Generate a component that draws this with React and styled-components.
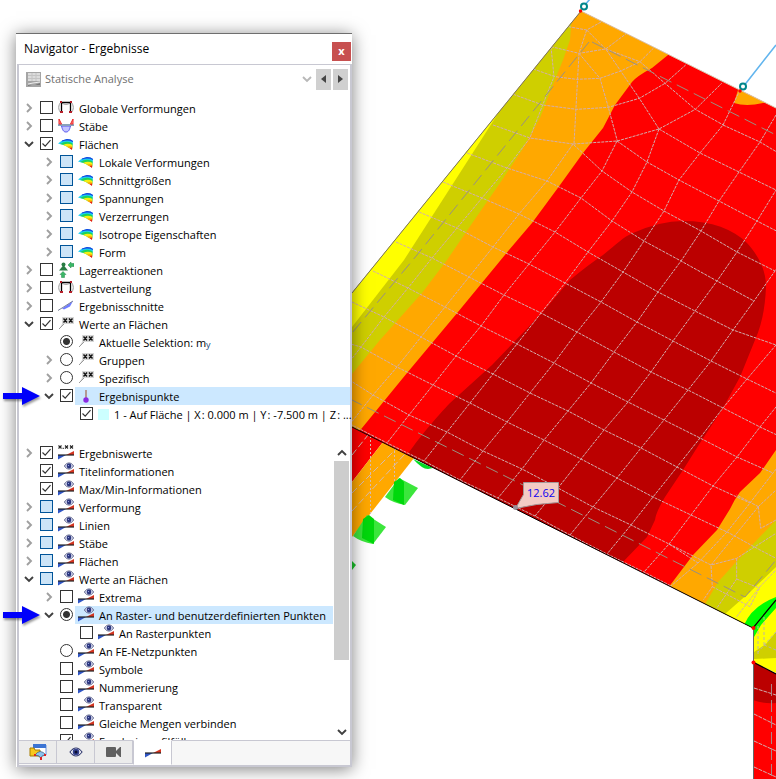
import React, { useState } from 'react';
import styled, { createGlobalStyle } from 'styled-components';

const GlobalStyle = createGlobalStyle`
  * {
    box-sizing: border-box;
  }
  body {
    margin: 0;
    background: #fff;
    font-family: 'Open Sans', 'Noto Sans', sans-serif;
    font-size: 11px;
    color: #000;
  }
`;

const Page = styled.main`
  position: relative;
  display: flex;
  height: 100vh;
  min-height: 600px;
  padding: 33px 0 12px 16px;
  overflow: hidden;
`;

const SceneSvg = styled.svg`
  position: absolute;
  inset: 0;
  width: 100%;
  height: 100%;
`;

const Panel = styled.section`
  position: relative;
  display: flex;
  flex-direction: column;
  width: 336px;
  padding-left: 1px;
  border-top: 1px solid #6e6e6e;
  background: #fff;
  box-shadow: 0 2px 16px rgba(0, 0, 0, 0.5);
`;

const TitleBar = styled.header`
  display: flex;
  align-items: center;
  justify-content: space-between;
  height: 30px;
  padding: 4px 1px 0 7px;
`;

const PanelTitle = styled.h1`
  margin: 0 0 4px;
  font-size: 12px;
  font-weight: 400;
  line-height: 18px;
`;

const CloseButton = styled.button`
  width: 19px;
  height: 19px;
  padding: 0;
  border: 0;
  background: #c75050;
  color: #fff;
  font: inherit;
  font-weight: 700;
  line-height: 16px;
`;

const PanelBody = styled.div`
  display: flex;
  flex: 1;
  flex-direction: column;
  min-height: 0;
  border: 2px solid #c8c8d2;
  border-width: 1px 2px;
  border-bottom: 0;
`;

const SelectBar = styled.div`
  display: flex;
  align-items: center;
  gap: 2px;
  height: 28px;
  margin-bottom: 6px;
  padding: 0 2px 0 7px;
`;

const AnalysisSelect = styled.select`
  flex: 1;
  height: 20px;
  margin-left: 2px;
  padding: 0;
  border: 0;
  appearance: none;
  background: transparent;
  color: #707070;
  font: inherit;
  line-height: 20px;
  opacity: 1;
`;

const StepButton = styled.button`
  display: grid;
  place-items: center;
  width: 15px;
  height: 21px;
  padding: 0;
  border: 0;
  background: #d0d0d0;
`;

const Tree = styled.ul`
  flex: 1;
  min-width: 0;
  margin: 0;
  padding: 0;
  list-style: none;
`;

const LowerTree = styled.div`
  display: flex;
  flex: 1;
  min-height: 0;
  margin-top: 21px;
  overflow: hidden;
`;

const Row = styled.li`
  display: flex;
  align-items: flex-start;
  height: 18px;
  padding-left: ${({ $level }) => 1 + $level * 20}px;
`;

const Expander = styled.button`
  display: grid;
  flex: none;
  place-items: center;
  width: 17px;
  height: 18px;
  margin-right: 3px;
  padding: 0;
  border: 0;
  background: none;
  visibility: ${({ $hidden }) => ($hidden ? 'hidden' : 'visible')};
`;

const Tick = styled.input`
  flex: none;
  width: 13px;
  height: 13px;
  margin: 2px 2px 0 0;
  border: 1px solid ${({ $partial }) => ($partial ? '#005499' : '#333')};
  border-radius: ${({ type }) => (type === 'radio' ? '50%' : '0')};
  appearance: none;
  background: ${({ $partial }) => ($partial ? '#cce4f7' : '#fff')};

  &[type='checkbox']:checked {
    background: #fff
      url("data:image/svg+xml,%3Csvg xmlns='http://www.w3.org/2000/svg' viewBox='0 0 11 11'%3E%3Cpath d='M1.500 5.500l2.700 2.700 5.300-6' fill='none' stroke='%23333' stroke-width='1.200'/%3E%3C/svg%3E");
  }
  &[type='radio']:checked {
    background: radial-gradient(circle, #333 3px, #fff 4px);
  }
`;

const RowLabel = styled.label`
  display: flex;
  flex: 1;
  align-items: center;
  gap: 5px;
  min-width: 0;
  height: 18px;
  padding-left: 3px;
  background: ${({ $selected }) => ($selected ? '#cce8ff' : 'none')};
  line-height: 18px;
  white-space: nowrap;

  svg {
    flex: none;
  }
  sub {
    color: #234a78;
    font-size: 9px;
    line-height: 9px;
    vertical-align: -1px;
  }
`;

const LabelText = styled.span`
  padding-top: 2px;
`;

const Swatch = styled.span`
  flex: none;
  width: 11px;
  height: 11px;
  background: #ccffff;
`;

const ScrollBar = styled.div`
  display: flex;
  flex: none;
  flex-direction: column;
  width: 17px;
  padding: 0 1px;
`;

const ScrollButton = styled.button`
  display: grid;
  place-items: center;
  width: 15px;
  height: 17px;
  padding: 0;
  border: 0;
  background: none;
`;

const ScrollTrack = styled.div`
  flex: 1;
`;

const ScrollThumb = styled.div`
  height: 76%;
  background: #cdcdcd;
`;

const TabBar = styled.nav`
  display: flex;
  height: 27px;
  border-bottom: 2px solid #c8c8d2;
  background: #f7f7f7;
  box-shadow: inset 0 1px #c8c8d2;
`;

const Tab = styled.button`
  display: grid;
  place-items: center;
  width: ${({ $active }) => ($active ? '39px' : '38px')};
  height: ${({ $active }) => ($active ? '25px' : '24px')};
  padding: 0;
  border: 1px solid #c8c8d2;
  border-top-color: ${({ $active }) => ($active ? '#fff' : '#c8c8d2')};
  border-left-width: ${({ $active }) => ($active ? '1px' : '0')};
  border-bottom-color: ${({ $active }) => ($active ? '#fff' : '#c8c8d2')};
  background: ${({ $active }) => ($active ? '#fff' : '#ececec')};
`;

const Marker = styled.svg`
  position: absolute;
  top: ${({ $top }) => $top}px;
  left: 2px;
  filter: drop-shadow(1px 2px 1px rgba(0, 0, 0, 0.4));
`;

const Chevron = ({ dir, color = '#404040' }) => {
  const shapes = {
    right: 'M3 1l4 4-4 4',
    down: 'M1 3l4 4 4-4',
    up: 'M1 7l4-4 4 4',
  };
  return (
    <svg width="10" height="10" viewBox="0 0 10 10">
      <path d={shapes[dir]} fill="none" stroke={color} strokeWidth="1.900" />
    </svg>
  );
};

const FrameIcon = () => (
  <svg width="16" height="16" viewBox="0 0 16 16">
    <path d="M3 2C0 5 0 10 3 13M13 2c3 3 3 8 0 11" fill="none" stroke="#999" />
    <path d="M4 3c2 2 6 2 8 0" fill="none" stroke="#aaa" />
    <path d="M3.500 12V2.500h9V12" fill="none" stroke="#000" strokeWidth="1.300" />
    <path d="M2 1h2v2H2zM12 1h2v2h-2zM2 11h3v2H2zM11 11h3v2h-3z" fill="#b5202a" />
  </svg>
);

const BeamIcon = () => (
  <svg width="16" height="16" viewBox="0 0 16 16">
    <path d="M3.500 8h9c-1 4-2 6-4.500 6S4.500 12 3.500 8z" fill="#c3c3ff" stroke="#5555ef" />
    <path d="M0 7h16" stroke="#8aa2bb" strokeWidth="2" />
    <path d="M1 1v5h2.500zM15 1v5h-2.500z" fill="#ff9c9c" stroke="#e22" />
  </svg>
);

const SurfaceIcon = () => (
  <svg width="16" height="16" viewBox="0 0 16 16">
    <path d="M0 7.500L4 4.500 9 3q4 0 6 2l-1 8-4-2-4-2z" fill="#19cdf2" />
    <path d="M4 4.500L9 3q4 0 6 2l-.2 1Q10 3.500 4 5.500z" fill="#1b3ee0" />
    <path d="M2 8Q9 4 14.700 7.500L14 13l-4-2-4-2z" fill="#1cd45a" />
    <path d="M5 9Q10 6.500 14.500 9L14 13l-4-2z" fill="#f4ee12" />
    <path d="M9 11q2-1.500 5.300-.5L14 13.500z" fill="#ffb000" />
    <path d="M11.500 12l2.700-.5-.2 2.500z" fill="#e21a1a" />
  </svg>
);

const SupportIcon = () => (
  <svg width="16" height="16" viewBox="0 0 16 16">
    <circle cx="5.500" cy="2.500" r="2" fill="#287c43" />
    <path d="M5.500 3L10 8.500H1z" fill="#287c43" />
    <path d="M10 3l3-3v1.500h3v3h-3V6zM5 9.500l3 3H6.500v3h-3v-3H2z" fill="#39b866" stroke="#23864a" strokeWidth=".5" />
  </svg>
);

const SectionIcon = () => (
  <svg width="16" height="16" viewBox="0 0 16 16">
    <path d="M4 10.500L15 3l-3 5.500-6 3z" fill="#6f7dff" />
    <path d="M0 12.500L15 3" stroke="#788099" />
  </svg>
);

const ValueIcon = () => (
  <svg width="16" height="16" viewBox="0 0 16 16">
    <path d="M1 13l3-5V1h12v7H6z" fill="#d6d6d6" />
    <path d="M1 13l5-5" stroke="#999" />
    <path d="M5.500 2.500l3.500 4m0-4l-3.500 4M11 2.500l3.500 4m0-4l-3.500 4" stroke="#111" strokeWidth="1.400" />
  </svg>
);

const PointIcon = () => (
  <svg width="16" height="16" viewBox="0 0 16 16">
    <path d="M8 2v9" stroke="#a97964" strokeWidth="1.400" />
    <circle cx="8" cy="12" r="2.700" fill="#8a2be2" />
  </svg>
);

const Wedges = () => (
  <>
    <path d="M0 10h8l-8 4.500z" fill="#2f55c4" />
    <path d="M16 6v4H8z" fill="#d33420" />
    <path d="M0 10h16" stroke="#222" strokeWidth="1.200" />
  </>
);

const EyeWedgeIcon = () => (
  <svg width="16" height="18" viewBox="0 -1 16 18">
    <Wedges />
    <path d="M6.500 3c2-4 7-4 9 0-2 4-7 4-9 0z" fill="#e5e8fb" stroke="#555b84" />
    <circle cx="11" cy="3" r="2.400" fill="#2c377f" />
    <circle cx="10.500" cy="2.500" r=".6" fill="#a9b4ee" />
  </svg>
);

const NumberWedgeIcon = () => (
  <svg width="16" height="18" viewBox="0 -1 16 18">
    <Wedges />
    <path d="M.5.500l3 3m0-3l-3 3M7 .5l3 3m0-3l-3 3M12 .5l3 3m0-3l-3 3M5.200 2.800v1.200" stroke="#222" strokeWidth="1.100" />
  </svg>
);

const icons = {
  frame: FrameIcon,
  beam: BeamIcon,
  surface: SurfaceIcon,
  support: SupportIcon,
  section: SectionIcon,
  value: ValueIcon,
  point: PointIcon,
  eye: EyeWedgeIcon,
  number: NumberWedgeIcon,
  swatch: Swatch,
};

// state: on, off or partial; open: true, false or missing for a leaf
const resultRows = [
  { text: 'Globale Verformungen', icon: 'frame', level: 0, open: false },
  { text: 'Stäbe', icon: 'beam', level: 0, open: false },
  { text: 'Flächen', icon: 'surface', level: 0, open: true, state: 'on' },
  { text: 'Lokale Verformungen', icon: 'surface', level: 1, open: false, state: 'partial' },
  { text: 'Schnittgrößen', icon: 'surface', level: 1, open: false, state: 'partial' },
  { text: 'Spannungen', icon: 'surface', level: 1, open: false, state: 'partial' },
  { text: 'Verzerrungen', icon: 'surface', level: 1, open: false, state: 'partial' },
  { text: 'Isotrope Eigenschaften', icon: 'surface', level: 1, open: false, state: 'partial' },
  { text: 'Form', icon: 'surface', level: 1, open: false, state: 'partial' },
  { text: 'Lagerreaktionen', icon: 'support', level: 0, open: false },
  { text: 'Lastverteilung', icon: 'frame', level: 0, open: false },
  { text: 'Ergebnisschnitte', icon: 'section', level: 0, open: false },
  { text: 'Werte an Flächen', icon: 'value', level: 0, open: true, state: 'on' },
  { text: 'Aktuelle Selektion: m', sub: 'y', icon: 'value', level: 1, type: 'radio', state: 'on' },
  { text: 'Gruppen', icon: 'value', level: 1, open: false, type: 'radio' },
  { text: 'Spezifisch', icon: 'value', level: 1, open: false, type: 'radio' },
  { text: 'Ergebnispunkte', icon: 'point', level: 1, open: true, state: 'on', selected: true },
  // hair spaces before the colons
  { text: '1 - Auf Fläche | X\u200a: 0.000 m | Y\u200a: -7.500 m | Z\u200a: ...', icon: 'swatch', level: 2, state: 'on' },
];

const displayRows = [
  { text: 'Ergebniswerte', icon: 'number', level: 0, open: false, state: 'on' },
  { text: 'Titelinformationen', icon: 'eye', level: 0, state: 'on' },
  { text: 'Max/Min-Informationen', icon: 'eye', level: 0, state: 'on' },
  { text: 'Verformung', icon: 'eye', level: 0, open: false, state: 'partial' },
  { text: 'Linien', icon: 'eye', level: 0, open: false, state: 'partial' },
  { text: 'Stäbe', icon: 'eye', level: 0, open: false, state: 'partial' },
  { text: 'Flächen', icon: 'eye', level: 0, open: false, state: 'partial' },
  { text: 'Werte an Flächen', icon: 'eye', level: 0, open: true, state: 'partial' },
  { text: 'Extrema', icon: 'eye', level: 1, open: false },
  {
    text: 'An Raster- und benutzerdefinierten Punkten',
    icon: 'eye',
    level: 1,
    open: true,
    type: 'radio',
    state: 'on',
    selected: true,
  },
  { text: 'An Rasterpunkten', icon: 'eye', level: 2 },
  { text: 'An FE-Netzpunkten', icon: 'eye', level: 1, type: 'radio' },
  { text: 'Symbole', icon: 'eye', level: 1 },
  { text: 'Nummerierung', icon: 'eye', level: 1 },
  { text: 'Transparent', icon: 'eye', level: 1 },
  { text: 'Gleiche Mengen verbinden', icon: 'eye', level: 1 },
  { text: 'Ergebnisprofilfüllung', icon: 'eye', level: 1, state: 'on' },
];

const TreeRows = ({ rows, name }) => (
  <Tree>
    {rows.map(({ text, sub, icon, level, open, type = 'checkbox', state, selected }, i) => {
      const Icon = icons[icon];
      const id = `${name}-${i}`;
      return (
        <Row key={id} $level={level}>
          <Expander $hidden={open === undefined} aria-label={text} aria-expanded={open}>
            <Chevron dir={open ? 'down' : 'right'} color={open ? '#404040' : '#a0a0a0'} />
          </Expander>
          <Tick id={id} type={type} name={type === 'radio' ? name : id} defaultChecked={state === 'on'} $partial={state === 'partial'} />
          <RowLabel htmlFor={id} $selected={selected}>
            <Icon />
            <LabelText>
              {text}
              {sub && <sub>{sub}</sub>}
            </LabelText>
          </RowLabel>
        </Row>
      );
    })}
  </Tree>
);

// mesh nodes, one list for each line running down to the left
const meshLines = [
  { start: -3, pts: [[493, 125], [467, 153], [443, 182], [419, 212], [396, 242], [373, 271], [352, 302], [340, 341], [340, 379]], edge: true },
  { start: -3, pts: [[530, 138], [507, 168], [482, 198], [457, 228], [432, 258], [408, 288], [384, 317], [361, 347], [340, 374]] },
  { start: -3, pts: [[573, 144], [547, 181], [519, 214], [493, 247], [469, 277], [445, 307], [421, 337], [397, 367], [373, 395], [350, 424]] },
  { start: -4, pts: [[617, 141], [602, 171], [581, 198], [555, 232], [529, 264], [504, 295], [481, 326], [456, 356], [433, 385], [409, 415], [387, 443]] },
  { start: -5, pts: [[659, 129], [647, 162], [632, 192], [612, 221], [588, 252], [565, 283], [541, 313], [517, 344], [493, 374], [470, 403], [447, 432], [424, 461]] },
  { start: -7, pts: [[740, 90], [723, 125], [700, 153], [679, 180], [664, 211], [644, 241], [623, 272], [601, 302], [577, 332], [554, 363], [530, 393], [507, 422], [483, 451], [460, 480]] },
  { start: -7, pts: [[776, 115], [760, 142], [739, 172], [719, 201], [701, 231], [681, 261], [658, 292], [637, 322], [614, 352], [591, 383], [568, 411], [544, 440], [522, 469], [498, 498]] },
  { start: -6, pts: [[792, 161], [776, 190], [757, 221], [737, 252], [717, 281], [695, 311], [673, 341], [651, 372], [628, 402], [604, 430], [581, 459], [558, 488], [535, 516]] },
  { start: -4, pts: [[796, 241], [775, 271], [754, 301], [733, 330], [711, 361], [688, 390], [664, 420], [641, 448], [617, 478], [593, 507], [570, 535]] },
  { start: -1, pts: [[776, 345], [747, 379], [723, 408], [700, 438], [677, 467], [653, 497], [631, 525], [607, 554]] },
  { start: 0, pts: [[784, 397], [760, 427], [737, 457], [713, 486], [691, 515], [669, 544], [644, 572]] },
  { start: 1, pts: [[796, 444], [773, 473], [750, 503], [727, 532], [698, 563], [671, 586]] },
];

const crossLines = [];
for (let row = -6; row <= 6; row++) {
  crossLines.push(meshLines.filter(l => l.pts[row - l.start]).map(l => l.pts[row - l.start]));
}

// irregular part of the mesh round the corner supports
const cornerMesh = [
  '490,283 578,315 680,328 775,322 868,295 945,250 1007,195',
  '550,207 615,230 680,238 750,235 812,213 870,185 910,145',
  '603,140 687,160 767,147 830,100',
  '655,80 710,90 755,65',
  '710,90 687,160 672,432',
  '603,140 612,230 578,315 540,413',
  '710,90 767,147 812,213 868,295 927,387',
  '687,160 750,235 775,322 802,423',
  '670,432 802,423 927,387 1036,328 1115,250',
  '767,147 870,185 945,250 1036,328 1120,375',
  '1225,1520 1083,1695 1087,1760 1060,1800',
  '1225,1520 1232,1585 1278,1560',
  '957,1632 1083,1695 1160,1675 1278,1600',
  '1225,1520 1278,1470',
  '1160,1675 1160,1737 1100,1825',
  '1130,1595 1230,1650 1278,1675',
  '1087,1760 1200,1820 1230,1760 1278,1710',
  '1160,1737 1230,1765',
  '1225,1520 1160,1485',
  '1160,1850 1230,1760',
];

const toPoints = pts => pts.map(p => p.join(',')).join(' ');

const Scene = () => (
  <SceneSvg viewBox="0 0 776 779" preserveAspectRatio="xMinYMin slice" role="img" aria-label="12.62">
    <defs>
      <clipPath id="slab">
        <path d="M581 11L776 108V600L753 628 352 427V293z" />
      </clipPath>
    </defs>

    <path d="M352 427l31 15-31 40z" fill="#f00" />
    <path d="M383 442l31 16-62 79v-55z" fill="#ffa800" />
    <path d="M413 459l20 9-5 1q-6 0-15-10z" fill="#0d2" />
    <path d="M399 478l19 10-13 17q-12-2-20-8z" fill="#3ce63c" />
    <path d="M394 482l6-4 4 4v23l-11-5z" fill="#00d80c" />
    <path d="M367 515l19 12-13 17q-12-2-20-8z" fill="#3ce63c" />
    <path d="M363 519l6-4 5 4v25l-12-6z" fill="#00d80c" />
    <path d="M352 561l4 4-4 5z" fill="#1cc72c" />
    <g stroke="#d6bbb0" strokeDasharray="2 2" fill="none">
      <path d="M370.500 436v78M394.500 447v34" />
      <path d="M352 455l16-20M352 511l53-57M352 493l45-45" strokeDasharray="7 3" />
    </g>

    <g clipPath="url(#slab)">
      <path d="M352 0H776V779H352z" fill="#f00" />
      <path
        d="M352 0H680L668 55 652 68Q637 76 632 82L615 105 603 128 583 153 560 185 532 223 509 250 458 312 407 373 362 428 352 440z"
        fill="#ffa800"
      />
      <path
        d="M352 0H575L571 27 570 40 563 60 550 92 540 118 522 150 500 183 473 222 447 260 422 293 380 340 352 374z"
        fill="#cfcf00"
      />
      <path d="M352 0H520L499 112 404 260 352 327z" fill="#ff0" />
      <path d="M738 90l-4 13q12 4 29 0l13-1V90z" fill="#ffa800" />
      <path
        d="M407 455C425 430 437 417 450 403L492 365 542 313 570 280Q588 265 603 255C617 244 623 237 633 233Q660 221 683 221C712 221 733 229 747 243 758 255 766 270 766 286Q765 318 755 340L740 377 723 408 700 443 683 470 665 497Q656 512 655 520L647 537 620 565z"
        fill="#bb0000"
      />
      <path d="M776 450L760 473 740 492Q734 500 730 509L717 530 693 555 665 592 776 640z" fill="#ffa800" />
      <path d="M776 520L755 542 738 560 718 582 704 606 776 640z" fill="#cfcf00" />
      <path d="M776 567L750 592 725 614 776 640z" fill="#ff0" />
      <path d="M776 597Q752 606 744 625l9 5 23-28z" fill="#0f0" />

      <g fill="none" stroke="#d2aeae" strokeWidth="1" strokeDasharray="3 1">
        {meshLines.filter(l => !l.edge).map((l, i) => (
          <polyline key={i} points={toPoints(l.pts)} />
        ))}
        {crossLines.map((pts, i) => (
          <polyline key={i} points={toPoints(pts)} />
        ))}
        <g transform="translate(350 0) scale(.33333)" strokeWidth="3" strokeDasharray="9 3">
          {cornerMesh.map(points => (
            <polyline key={points} points={points} />
          ))}
        </g>
      </g>
      <g fill="none" stroke="#999080" strokeDasharray="13 6">
        <path d="M589 42L417 255 352 333" />
        <path d="M592 42L776 135M350 399L523 485 745 597 776 560" />
      </g>
    </g>

    <path d="M352 293L581 11" stroke="#777760" fill="none" />
    <path d="M581 11l195 97" stroke="#d9c9b0" fill="none" />
    <path d="M352 427l401 201" stroke="#000" fill="none" />

    <path d="M753 628l23-28v73l-23-11z" fill="#ff0" />
    <path d="M753 628l23-28v8l-15 17-7 12z" fill="#0f0" />
    <path d="M776 632l-10 12-12 8v7l22-1z" fill="#cfcf00" />
    <path d="M758 654v-28M764 645v-30M776 632l-18 20M776 650l-12-5" stroke="#bdb5a5" strokeDasharray="3 2" fill="none" />
    <path d="M753 662l23 12v105h-23z" fill="#f00" />
    <path d="M753 662l23 12v29q-12 1-23-3z" fill="#bb0000" />
    <path d="M754 688l22 7M754 714l22 11M754 741l22 10M754 767l22 10" stroke="#d2aeae" strokeDasharray="4 1" />
    <path d="M771.500 684v95" stroke="#a88" strokeDasharray="12 4" />
    <path d="M753 628l23-28M753 662l23 12" stroke="#000" strokeWidth="1.200" />
    <path d="M753.500 628v151" stroke="#666" />

    <path d="M584 6l6-7M743 87l33-42" stroke="#62b5ee" strokeWidth="1.600" />
    <g fill="#fff" stroke="#00868b" strokeWidth="2">
      <circle cx="584" cy="6.500" r="3" />
      <circle cx="743" cy="86.500" r="3" />
    </g>
    <g fill="#f00">
      <circle cx="580.500" cy="11" r="1.700" />
      <circle cx="740" cy="91" r="1.700" />
      <circle cx="753.500" cy="628" r="2" />
      <circle cx="753.500" cy="662.500" r="2" />
    </g>

    <path d="M523.500 482.500h35v20q-22 1-43 6l8-14z" fill="#f3cbc4" stroke="#a39a9a" />
    <circle cx="515.500" cy="507.500" r="2.500" fill="#98909b" />
    <text x="527" y="497" fill="#0a00f0" fontFamily="Open Sans, sans-serif" fontSize="11" fontWeight="500">
      12.62
    </text>
  </SceneSvg>
);

const BlueArrow = ({ top }) => (
  <Marker $top={top} width="40" height="20" viewBox="0 0 40 20">
    <path d="M1 7h19V1l18 9-18 9v-6H1z" fill="#0000fa" />
  </Marker>
);

const App = () => {
  const [tab, setTab] = useState('results');

  return (
    <Page>
      <GlobalStyle />
      <Scene />
      <Panel>
        <TitleBar>
          <PanelTitle>Navigator - Ergebnisse</PanelTitle>
          <CloseButton aria-label="Schließen">x</CloseButton>
        </TitleBar>
        <PanelBody>
          <SelectBar>
            <svg width="15" height="15" viewBox="0 0 15 15">
              <path d="M0 0h15v15H0z" fill="#a5a5a5" />
              <path d="M2 1h12v8H2z" fill="#dcdcdc" />
              <path d="M2 3.500h12M2 6.500h12M6 1v8M10 1v8" stroke="#c4c4c4" />
              <path d="M2 12l5-1 7-1" stroke="#eee" fill="none" />
              <path d="M2 13h4l-4 1zM14 11v2H9z" fill="#777" />
            </svg>
            <AnalysisSelect aria-label="Statische Analyse" disabled>
              <option>Statische Analyse</option>
            </AnalysisSelect>
            <Chevron dir="down" color="#b8b8b8" />
            <span />
            <StepButton aria-label="Zurück">
              <svg width="5" height="8" viewBox="0 0 5 8">
                <path d="M5 0v8L0 4z" fill="#444" />
              </svg>
            </StepButton>
            <StepButton aria-label="Weiter">
              <svg width="5" height="8" viewBox="0 0 5 8">
                <path d="M0 0v8l5-4z" fill="#444" />
              </svg>
            </StepButton>
          </SelectBar>
          <div>
            <TreeRows rows={resultRows} name="results" />
          </div>
          <LowerTree>
            <TreeRows rows={displayRows} name="display" />
            <ScrollBar>
              <ScrollButton aria-label="Nach oben">
                <Chevron dir="up" />
              </ScrollButton>
              <ScrollTrack>
                <ScrollThumb />
              </ScrollTrack>
              <ScrollButton aria-label="Nach unten">
                <Chevron dir="down" />
              </ScrollButton>
            </ScrollBar>
          </LowerTree>
          <TabBar>
            <Tab aria-label="Daten" $active={tab === 'data'} onClick={() => setTab('data')}>
              <svg width="18" height="16" viewBox="0 0 18 16">
                <path d="M5 1h12v10H5z" fill="#fff" stroke="#6a94dc" />
                <path d="M4 0h13v4H4z" fill="#3b74d4" />
                <path d="M1 4h4l1 2h5v6H1z" fill="#f7c81c" stroke="#a67c00" />
                <path d="M6 11q5-7 11 0l-4 1-1 3-2-3z" fill="#8ac2ec" stroke="#357" strokeWidth=".7" />
                <path d="M5 10h2v2H5zM15 10h2v2h-2zM11 13h2v3h-2z" fill="#d22" />
              </svg>
            </Tab>
            <Tab aria-label="Zeigen" $active={tab === 'view'} onClick={() => setTab('view')}>
              <svg width="14" height="12" viewBox="0 0 14 12">
                <path d="M1 6q6-8 12 0-6 8-12 0z" fill="#fff" stroke="#333b70" strokeWidth="1.200" />
                <circle cx="7" cy="6" r="3.300" fill="#34418f" />
                <circle cx="7" cy="6" r="1.500" fill="#080c30" />
              </svg>
            </Tab>
            <Tab aria-label="Ansichten" $active={tab === 'camera'} onClick={() => setTab('camera')}>
              <svg width="15" height="10" viewBox="0 0 15 10">
                <path d="M1 0h8q1 0 1 1v3l4-4h1v10h-1l-4-4v3q0 1-1 1H1Q0 10 0 9V1q0-1 1-1z" fill="#606060" />
              </svg>
            </Tab>
            <Tab aria-label="Ergebnisse" $active={tab === 'results'} onClick={() => setTab('results')}>
              <svg width="16" height="10" viewBox="0 5 16 10">
                <Wedges />
              </svg>
            </Tab>
          </TabBar>
        </PanelBody>
      </Panel>
      <BlueArrow top={386} />
      <BlueArrow top={605} />
    </Page>
  );
};

export default App;
